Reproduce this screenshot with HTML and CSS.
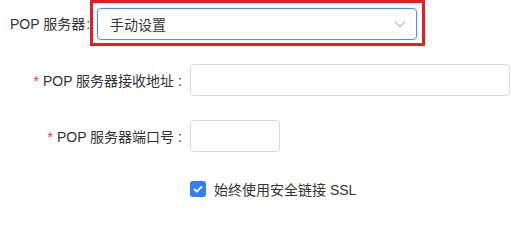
FILE: index.html
```html
<!DOCTYPE html>
<html lang="zh">
<head>
<meta charset="utf-8">
<link rel="stylesheet" href="styles.css">
</head>
<body>
<div class="form">
  <div class="row row-top">
    <span class="label-inline">POP 服务器<span class="colon-tight">:</span></span>
    <div class="highlight">
      <div class="select">
        <span class="select-value">手动设置</span>
        <svg class="chevron" width="12" height="8" viewBox="0 0 12 8"><path d="M1 1.5 L6 6.5 L11 1.5" fill="none" stroke="#bdbdbd" stroke-width="1.2"/></svg>
      </div>
    </div>
  </div>
  <div class="row row-field">
    <span class="label"><span class="req">*</span>POP 服务器接收地址<span class="colon">:</span></span>
    <div class="input input-wide"></div>
  </div>
  <div class="row row-field row-field-2">
    <span class="label"><span class="req">*</span>POP 服务器端口号<span class="colon">:</span></span>
    <div class="input input-short"></div>
  </div>
  <div class="row row-check">
    <span class="label"></span>
    <label class="check">
      <span class="box"><svg width="10" height="8" viewBox="0 0 10 8"><path d="M1 4 L3.8 6.6 L9 1.4" fill="none" stroke="#fff" stroke-width="2"/></svg></span>
      <span>始终使用安全链接 SSL</span>
    </label>
  </div>
</div>
</body>
</html>
```
FILE: styles.css
```css
html, body {
  margin: 0;
  padding: 0;
  background: #fff;
}
body {
  font-family: "Liberation Sans", "Noto Sans CJK SC", sans-serif;
  font-size: 14px;
  color: #333;
}
.form {
  padding-top: 0;
}
.row {
  display: flex;
  align-items: center;
}
.row-top {
  padding-left: 10px;
}
.label-inline {
  margin-right: 0;
}
.colon-tight {
  margin-left: 1px;
}
.colon {
  margin-left: 4px;
}
.highlight {
  border: 3px solid #e41e26;
  padding: 5px 5px 3px 4px;
}
.select {
  box-sizing: border-box;
  width: 320px;
  height: 32px;
  border: 1px solid #4a93f5;
  border-radius: 4px;
  box-shadow: 0 0 0 1px rgba(74, 147, 245, 0.12);
  display: flex;
  align-items: center;
  justify-content: space-between;
  padding: 0 10px 0 12px;
}
.chevron {
  display: block;
}
.row-field {
  margin-top: 18px;
  height: 32px;
}
.row-field-2 {
  margin-top: 24px;
}
.label {
  width: 182px;
  text-align: right;
  margin-right: 8px;
  flex: none;
}
.req {
  color: #e5373b;
  margin-right: 4px;
}
.input {
  box-sizing: border-box;
  height: 32px;
  border: 1px solid #d9d9d9;
  border-radius: 4px;
}
.input-wide {
  width: 320px;
}
.input-short {
  width: 90px;
}
.row-check {
  margin-top: 29px;
  height: 16px;
}
.check {
  display: flex;
  align-items: center;
  gap: 8px;
}
.box {
  width: 16px;
  height: 16px;
  border-radius: 3px;
  background: #2f7ff5;
  display: flex;
  align-items: center;
  justify-content: center;
}
.box svg {
  display: block;
}
```
